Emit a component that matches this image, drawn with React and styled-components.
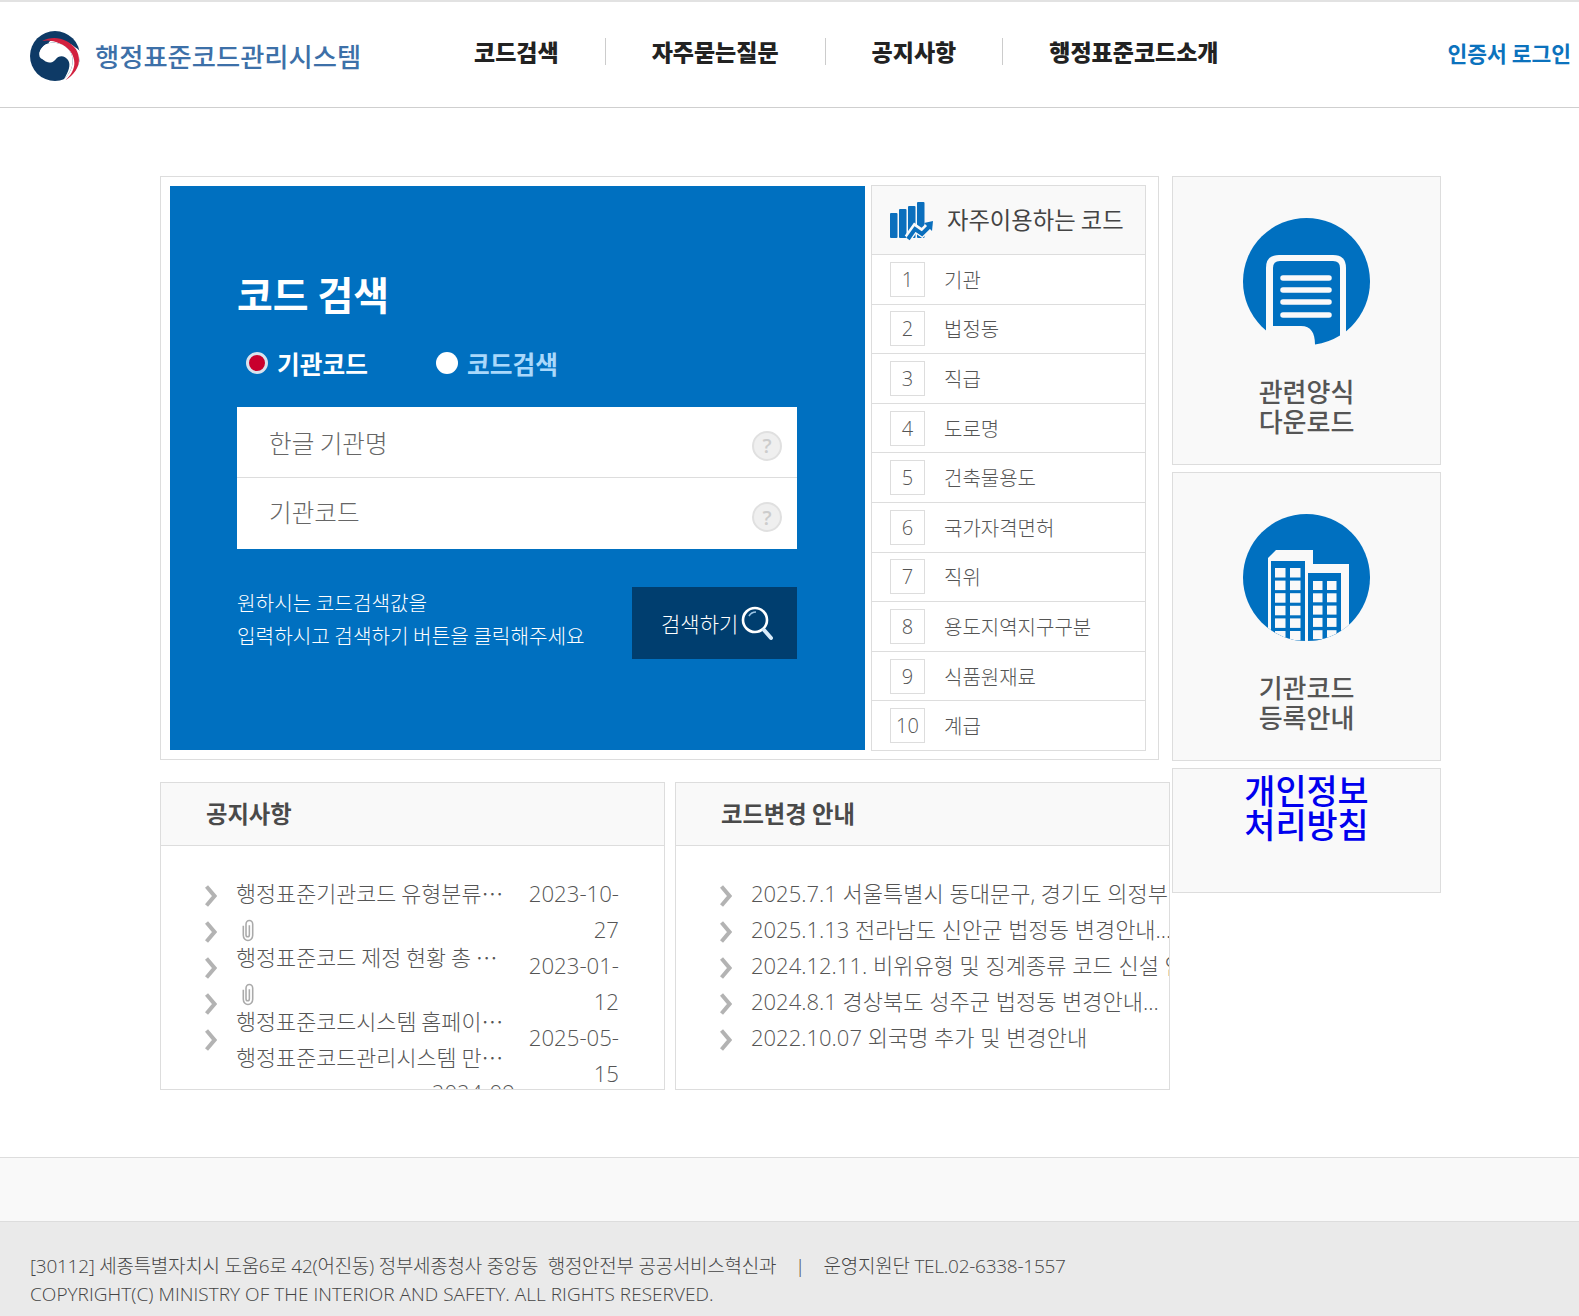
import React from "react";
import styled, { createGlobalStyle } from "styled-components";

const KR = `"Open Sans", "Noto Sans CJK KR", sans-serif`;
const HEAD = `"Noto Sans CJK KR", sans-serif`;

const Global = createGlobalStyle`
  html, body { margin: 0; padding: 0; background: #fff; }
  body { font-family: ${KR}; color: #555; width: 1579px; height: 1316px; overflow: hidden; }
  * { box-sizing: border-box; }
  ul { list-style: none; margin: 0; padding: 0; }
`;

const Page = styled.div`
  width: 1579px;
  height: 1316px;
  display: flex;
  flex-direction: column;
  overflow: hidden;
`;

const Header = styled.header`
  height: 108px;
  border-top: 2px solid #e2e2e2;
  border-bottom: 1px solid #cfcfcf;
  display: flex;
  align-items: center;
  padding-left: 30px;
  padding-right: 8px;
`;
const LogoMark = styled.svg`
  width: 50px;
  height: 50px;
  flex: none;
  margin-top: 2px;
`;
const LogoText = styled.div`
  font-family: ${HEAD};
  font-size: 26.3px;
  font-weight: 500;
  color: #3d70a8;
  width: 333px;
  margin-left: 15px;
  margin-top: 2px;
  white-space: nowrap;
`;
const Nav = styled.nav`
  display: flex;
  align-items: center;
  margin-top: -6px;
`;
const NavItem = styled.a`
  font-family: ${HEAD};
  font-size: 23px;
  font-weight: 900;
  color: #222;
  padding: 0 46px;
  white-space: nowrap;
  line-height: 27px;
  height: 27px;
  border-right: ${(p) => (p.$last ? "none" : "1px solid #ccc")};
`;
const Login = styled.a`
  margin-left: auto;
  margin-top: -4px;
  font-family: ${HEAD};
  font-size: 21.5px;
  font-weight: 700;
  color: #0b72bd;
  white-space: nowrap;
`;

const Main = styled.main`
  flex: none;
  height: 1049px;
  padding: 68px 0 0 160px;
  display: flex;
`;
const LeftCol = styled.div`
  width: 1012px;
  flex: none;
`;
const SearchPanel = styled.section`
  width: 999px;
  height: 584px;
  border: 1px solid #ddd;
  padding: 8px 12px 8px 9px;
  display: flex;
  gap: 6px;
`;
const BluePanel = styled.div`
  width: 695px;
  height: 564px;
  margin-top: 1px;
  background: #0070c0;
  padding: 77px 67px 0;
  color: #fff;
  flex: none;
`;
const SearchTitle = styled.h2`
  margin: 0;
  font-family: ${HEAD};
  font-size: 38.9px;
  font-weight: 700;
  line-height: 60px;
  color: #fff;
`;
const RadioRow = styled.div`
  display: flex;
  margin-top: 25px;
  padding-left: 9px;
  height: 30px;
  align-items: center;
`;
const RadioOption = styled.label`
  display: flex;
  align-items: center;
  gap: 9px;
  width: 190px;
  font-family: ${HEAD};
  font-size: 24.7px;
  font-weight: 700;
  color: ${(p) => (p.$on ? "#fff" : "#a9d8fb")};
`;
const RadioDot = styled.span`
  width: 22px;
  height: 22px;
  border-radius: 50%;
  background: ${(p) => (p.$on ? "#c8002d" : "#fff")};
  border: ${(p) => (p.$on ? "3px solid #d8e3ee" : "none")};
  flex: none;
`;
const InputBox = styled.div`
  margin-top: 29px;
  width: 560px;
  height: 142px;
  background: #fff;
`;
const InputRow = styled.div`
  height: 71px;
  display: flex;
  align-items: center;
  justify-content: space-between;
  padding: 0 15px 0 32px;
  border-bottom: ${(p) => (p.$last ? "none" : "1px solid #ddd")};
  font-size: 24.6px;
  font-weight: 300;
  font-family: ${HEAD};
  color: #666;
`;
const Placeholder = styled.span`
  margin-top: ${(p) => p.$lift}px;
`;
const HelpDot = styled.span`
  width: 30px;
  height: 30px;
  margin-top: 7px;
  border-radius: 50%;
  background: #efefef;
  border: 2px solid #e0e0e0;
  display: flex;
  align-items: center;
  justify-content: center;
  font-family: ${KR};
  font-size: 20px;
  font-weight: 600;
  color: #ccc;
`;
const SearchFoot = styled.div`
  margin-top: 38px;
  width: 560px;
  display: flex;
  justify-content: space-between;
`;
const Helper = styled.p`
  margin: -1px 0 0;
  font-family: ${HEAD};
  font-size: 20.2px;
  font-weight: 300;
  line-height: 33px;
  color: #fff;
  white-space: nowrap;
`;
const SearchButton = styled.button`
  width: 165px;
  height: 72px;
  flex: none;
  border: 0;
  background: #003e6f;
  color: #fff;
  display: flex;
  align-items: center;
  padding: 0 0 0 29px;
  gap: 3px;
  font-family: ${HEAD};
  font-size: 21px;
  font-weight: 300;
  white-space: nowrap;
`;
const Lens = styled.svg`
  width: 32px;
  height: 35px;
  flex: none;
`;

const CodeList = styled.div`
  width: 275px;
  height: 566px;
  border: 1px solid #ddd;
  flex: none;
  display: flex;
  flex-direction: column;
`;
const CodeHead = styled.div`
  height: 69px;
  flex: none;
  background: #f9f9f9;
  border-bottom: 1px solid #ddd;
  display: flex;
  align-items: center;
  padding-left: 14px;
  gap: 11px;
  font-family: ${HEAD};
  font-size: 23.3px;
  font-weight: 400;
  color: #444;
`;
const HeadLabel = styled.span`
  margin-top: -2px;
`;
const ChartIcon = styled.svg`
  width: 50px;
  height: 50px;
  flex: none;
`;
const CodeRow = styled.li`
  height: 49.6px;
  border-bottom: 1px solid #ddd;
  display: flex;
  align-items: center;
  padding-left: 18px;
  gap: 19px;
  font-family: ${HEAD};
  font-size: 20px;
  font-weight: 300;
  color: #555;
`;
const Rank = styled.span`
  width: 35px;
  height: 35px;
  border: 1px solid #ddd;
  display: flex;
  align-items: center;
  justify-content: center;
  font-family: ${KR};
  font-size: 20px;
  font-weight: 300;
  flex: none;
`;

const CardRow = styled.div`
  display: flex;
  margin-top: 22px;
  gap: 10px;
  width: 1010px;
`;
const Card = styled.section`
  width: ${(p) => p.$w}px;
  height: 308px;
  border: 1px solid #ddd;
  overflow: hidden;
  flex: none;
`;
const CardHead = styled.h3`
  margin: 0;
  height: 63px;
  background: #f9f9f9;
  border-bottom: 1px solid #ddd;
  padding: 0 0 2px 45px;
  display: flex;
  align-items: center;
  font-family: ${HEAD};
  font-size: 23.3px;
  font-weight: 700;
  color: #4a4a4a;
`;
const CardBody = styled.div`
  display: flex;
  padding: 29px 0 0 44px;
`;
const Chevrons = styled.ul`
  width: 31px;
  flex: none;
  padding-top: 3px;
`;
const ChevronItem = styled.li`
  height: 36px;
  display: flex;
  align-items: center;
`;
const Chev = styled.svg`
  width: 12px;
  height: 22px;
`;
const NoticeTitles = styled.div`
  width: 286px;
  flex: none;
`;
const LineText = styled.div`
  width: ${(p) => p.$w || 269}px;
  height: 36px;
  line-height: 36px;
  font-size: ${(p) => (p.$cjk ? 21.8 : 22)}px;
  font-weight: 300;
  font-family: ${(p) => (p.$cjk ? HEAD : KR)};
  color: #555;
  white-space: nowrap;
  overflow: hidden;
  text-overflow: ${(p) => (p.$clip ? "clip" : "ellipsis")};
`;
const ClipRow = styled.div`
  height: 28px;
  padding-left: 5px;
  display: flex;
  align-items: flex-end;
`;
const ClipIcon = styled.svg`
  width: 14px;
  height: 23px;
  margin-bottom: -3px;
`;
const LateDate = styled.div`
  height: 36px;
  line-height: 36px;
  text-align: right;
  font-size: 22.2px;
  font-weight: 300;
`;
const Dates = styled.div`
  width: 95px;
  flex: none;
  margin: 1px 0 0 2px;
  text-align: right;
  font-size: 22.2px;
  font-weight: 300;
  line-height: 36px;
`;
const ChangeList = styled.div`
  flex: 1;
  min-width: 0;
`;

const SideCol = styled.aside`
  width: 269px;
  flex: none;
  display: flex;
  flex-direction: column;
  gap: 7px;
`;
const SideBox = styled.a`
  height: ${(p) => p.$h}px;
  background: #f9f9f9;
  border: 1px solid #ddd;
  display: flex;
  flex-direction: column;
  align-items: center;
  padding-top: 41px;
`;
const SideIcon = styled.svg`
  width: 127px;
  height: 127px;
  flex: none;
`;
const SideLabel = styled.div`
  margin-top: 31px;
  font-family: ${HEAD};
  font-size: 26px;
  font-weight: 500;
  line-height: 29.5px;
  color: #555;
  text-align: center;
`;
const PrivacyBox = styled.a`
  height: 125px;
  background: #f9f9f9;
  border: 1px solid #ddd;
  text-align: center;
  font-family: ${HEAD};
  font-size: 33.8px;
  font-weight: 500;
  line-height: 33.5px;
  color: #0000ee;
  padding-top: 4px;
`;

const FootBand = styled.div`
  height: 64px;
  background: #f9f9f9;
  border-top: 1px solid #ddd;
  flex: none;
`;
const Footer = styled.footer`
  flex: 1;
  background: #eaeaea;
  border-top: 1px solid #ddd;
  padding: 30px 0 0 30px;
  font-size: 19px;
  font-weight: 300;
  font-family: ${KR};
  line-height: 28px;
  color: #444;
  white-space: pre;
`;
const FootLine = styled.div`
  letter-spacing: ${(p) => p.$ls}px;
`;

const Chevron = () => (
  <ChevronItem>
    <Chev viewBox="0 0 12 22">
      <path d="M1.5 1.5 L9.5 11 L1.5 20.5" fill="none" stroke="#b3b3b3" strokeWidth="4" />
    </Chev>
  </ChevronItem>
);

const Paperclip = () => (
  <ClipRow>
    <ClipIcon viewBox="0 0 13 22">
      <path
        d="M2 6.5 V15.5 a4.5 5 0 0 0 9 0 V5 a3.2 3.6 0 0 0 -6.4 0 V15 a1.6 2 0 0 0 3.2 0 V6"
        fill="none"
        stroke="#aaa"
        strokeWidth="1.5"
      />
    </ClipIcon>
  </ClipRow>
);

const rows = ["기관", "법정동", "직급", "도로명", "건축물용도", "국가자격면허", "직위", "용도지역지구구분", "식품원재료", "계급"];
const changes = [
  "2025.7.1 서울특별시 동대문구, 경기도 의정부시 법정동 변경안내",
  "2025.1.13 전라남도 신안군 법정동 변경안내...",
  "2024.12.11. 비위유형 및 징계종류 코드 신설 안내",
  "2024.8.1 경상북도 성주군 법정동 변경안내...",
  "2022.10.07 외국명 추가 및 변경안내",
];

export default function App() {
  return (
    <Page>
      <Global />
      <Header>
        <LogoMark viewBox="0 0 150 150">
          <circle cx="75" cy="75" r="75" fill="#0e3a66" />
          <path d="M28 72 C28 50 50 33 75 35 C105 38 127 60 128 86 C129 110 117 130 100 146 C120 150 150 110 150 75 L150 60 C125 40 100 20 60 30 Z" fill="#fff" />
          <path d="M36 30 C70 12 115 22 138 55 C158 90 143 125 106 148 C134 122 142 92 122 62 C100 36 65 24 36 30 Z" fill="#d2213f" />
          <path d="M28 72 C28 50 50 33 75 35 C105 38 127 60 128 86 C129 110 117 130 102 145 C115 122 124 102 114 87 C104 72 86 72 76 86 C66 98 50 96 42 88 C35 82 28 82 28 72 Z" fill="#fff" />
        </LogoMark>
        <LogoText>행정표준코드관리시스템</LogoText>
        <Nav>
          <NavItem>코드검색</NavItem>
          <NavItem>자주묻는질문</NavItem>
          <NavItem>공지사항</NavItem>
          <NavItem $last>행정표준코드소개</NavItem>
        </Nav>
        <Login>인증서 로그인</Login>
      </Header>

      <Main>
        <LeftCol>
          <SearchPanel>
            <BluePanel>
              <SearchTitle>코드 검색</SearchTitle>
              <RadioRow>
                <RadioOption $on>
                  <RadioDot $on />
                  기관코드
                </RadioOption>
                <RadioOption>
                  <RadioDot />
                  코드검색
                </RadioOption>
              </RadioRow>
              <InputBox>
                <InputRow>
                  <Placeholder $lift={0}>한글 기관명</Placeholder>
                  <HelpDot>?</HelpDot>
                </InputRow>
                <InputRow $last>
                  <Placeholder $lift={-6}>기관코드</Placeholder>
                  <HelpDot>?</HelpDot>
                </InputRow>
              </InputBox>
              <SearchFoot>
                <Helper>
                  원하시는 코드검색값을
                  <br />
                  입력하시고 검색하기 버튼을 클릭해주세요
                </Helper>
                <SearchButton>
                  검색하기
                  <Lens viewBox="0 0 32 35">
                    <circle cx="14" cy="14" r="12" fill="none" stroke="#fff" strokeWidth="2.6" />
                    <path d="M8 10 a8 8 0 0 1 7 -4" fill="none" stroke="#9cc4e4" strokeWidth="1.6" />
                    <path d="M23 24 L30 32" stroke="#d9ecfa" strokeWidth="4" strokeLinecap="round" />
                  </Lens>
                </SearchButton>
              </SearchFoot>
            </BluePanel>
            <CodeList>
              <CodeHead>
                <ChartIcon viewBox="0 0 50 50">
                  <rect x="4" y="18" width="7.5" height="25" rx="1" fill="#0b6fbd" />
                  <rect x="13" y="14" width="7.5" height="29" rx="1" fill="#0b6fbd" />
                  <rect x="22" y="11" width="7.5" height="32" rx="1" fill="#0b6fbd" />
                  <rect x="31" y="7" width="7.5" height="36" rx="1" fill="#0b6fbd" />
                  <path d="M22 43 L29 33 L36 38 L45 29" fill="none" stroke="#f9f9f9" strokeWidth="8" />
                  <path d="M22 44 L29 34 L36 39 L44 31" fill="none" stroke="#0b6fbd" strokeWidth="4" />
                  <path d="M38 28 L47 26 L46 36 Z" fill="#0b6fbd" />
                </ChartIcon>
                <HeadLabel>자주이용하는 코드</HeadLabel>
              </CodeHead>
              <ul>
                {rows.map((r, i) => (
                  <CodeRow key={r}>
                    <Rank>{i + 1}</Rank>
                    {r}
                  </CodeRow>
                ))}
              </ul>
            </CodeList>
          </SearchPanel>

          <CardRow>
            <Card $w={505}>
              <CardHead>공지사항</CardHead>
              <CardBody>
                <Chevrons>
                  {[0, 1, 2, 3, 4].map((i) => (
                    <Chevron key={i} />
                  ))}
                </Chevrons>
                <NoticeTitles>
                  <LineText $cjk>행정표준기관코드 유형분류 체계 변경 안내</LineText>
                  <Paperclip />
                  <LineText $cjk>행정표준코드 제정 현황 총 안내 자료 공개</LineText>
                  <Paperclip />
                  <LineText $cjk>행정표준코드시스템 홈페이지 개편 안내</LineText>
                  <LineText $cjk>행정표준코드관리시스템 만족도 조사 안내</LineText>
                  <LateDate>2024-09-</LateDate>
                </NoticeTitles>
                <Dates>
                  2023-10-27
                  <br />
                  2023-01-12
                  <br />
                  2025-05-15
                </Dates>
              </CardBody>
            </Card>
            <Card $w={495}>
              <CardHead>코드변경 안내</CardHead>
              <CardBody>
                <Chevrons>
                  {changes.map((c) => (
                    <Chevron key={c} />
                  ))}
                </Chevrons>
                <ChangeList>
                  {changes.map((c) => (
                    <LineText key={c} $w={480} $clip>
                      {c}
                    </LineText>
                  ))}
                </ChangeList>
              </CardBody>
            </Card>
          </CardRow>
        </LeftCol>

        <SideCol>
          <SideBox $h={289}>
            <SideIcon viewBox="0 0 127 127">
              <circle cx="63.5" cy="63.5" r="63.5" fill="#0070c0" />
              <path d="M23 127 V50 Q23 37 36 37 H90 Q103 37 103 50 V127 Z" fill="#f9f9f9" />
              <path d="M30 50 Q30 43 37 43 H90 Q97 43 97 50 V117.5 A63.5 63.5 0 0 1 72 126.4 C72 115 68 108 58 108 H30 Z" fill="#0070c0" />
              <path d="M40 60 H86 M40 72 H86 M40 84 H86 M40 97 H86" stroke="#f9f9f9" strokeWidth="5.5" strokeLinecap="round" />
            </SideIcon>
            <SideLabel>
              관련양식
              <br />
              다운로드
            </SideLabel>
          </SideBox>
          <SideBox $h={289}>
            <SideIcon viewBox="0 0 127 127">
              <defs>
                <clipPath id="bldg">
                  <circle cx="63.5" cy="63.5" r="63.5" />
                </clipPath>
              </defs>
              <circle cx="63.5" cy="63.5" r="63.5" fill="#0070c0" />
              <g clipPath="url(#bldg)">
                <path d="M25 127 V44 L33 36 H70 V50 H106 V127 Z" fill="#f9f9f9" />
                <rect x="28" y="47" width="34" height="80" fill="#0070c0" />
                <rect x="65" y="59" width="33" height="68" fill="#0070c0" />
                {[0, 1, 2, 3, 4, 5].map((r) =>
                  [32, 47].map((x) => (
                    <rect key={`l${r}${x}`} x={x} y={54 + r * 12.6} width="10.5" height="9.5" fill="#f9f9f9" />
                  ))
                )}
                {[0, 1, 2, 3, 4].map((r) =>
                  [70, 84].map((x) => (
                    <rect key={`r${r}${x}`} x={x} y={67 + r * 12.3} width="9.5" height="9" fill="#f9f9f9" />
                  ))
                )}
              </g>
            </SideIcon>
            <SideLabel>
              기관코드
              <br />
              등록안내
            </SideLabel>
          </SideBox>
          <PrivacyBox>
            개인정보
            <br />
            처리방침
          </PrivacyBox>
        </SideCol>
      </Main>

      <FootBand />
      <Footer>
        <FootLine $ls={-0.26}>{"[30112] 세종특별자치시 도움6로 42(어진동) 정부세종청사 중앙동  행정안전부 공공서비스혁신과    |    운영지원단 TEL.02-6338-1557"}</FootLine>
        <FootLine $ls={0.04}>COPYRIGHT(C) MINISTRY OF THE INTERIOR AND SAFETY. ALL RIGHTS RESERVED.</FootLine>
      </Footer>
    </Page>
  );
}
